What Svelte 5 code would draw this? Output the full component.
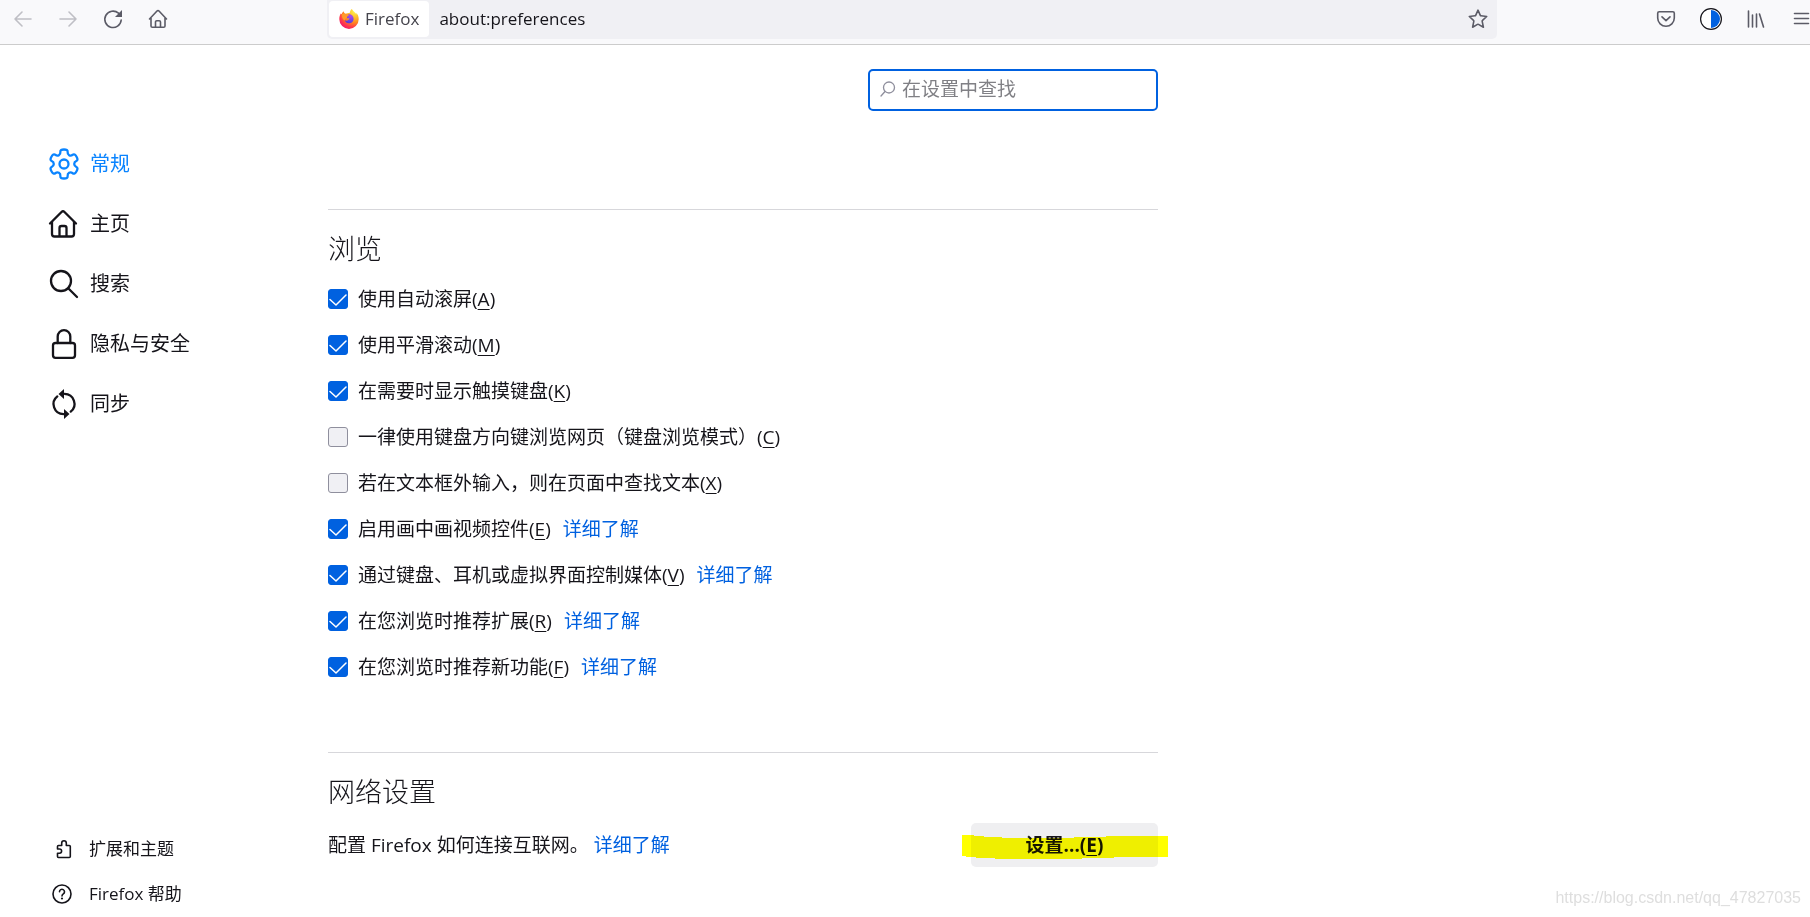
<script>
let query = $state('');
let selected = $state('general');

const categories = [
    { id: 'general', label: '常规' },
    { id: 'home', label: '主页' },
    { id: 'search', label: '搜索' },
    { id: 'privacy', label: '隐私与安全' },
    { id: 'sync', label: '同步' }
];

let options = $state([
    { id: 'autoscroll', text: '使用自动滚屏', key: 'A', checked: true },
    { id: 'smooth', text: '使用平滑滚动', key: 'M', checked: true },
    { id: 'touch', text: '在需要时显示触摸键盘', key: 'K', checked: true },
    { id: 'cursor', text: '一律使用键盘方向键浏览网页（键盘浏览模式）', key: 'C', checked: false },
    { id: 'typing', text: '若在文本框外输入，则在页面中查找文本', key: 'X', checked: false },
    { id: 'pip', text: '启用画中画视频控件', key: 'E', checked: true, link: true },
    { id: 'media', text: '通过键盘、耳机或虚拟界面控制媒体', key: 'V', checked: true, link: true },
    { id: 'extensions', text: '在您浏览时推荐扩展', key: 'R', checked: true, link: true },
    { id: 'features', text: '在您浏览时推荐新功能', key: 'F', checked: true, link: true }
]);

// six rounded teeth: quadratic curves through the midpoints of a polar outline
function gearOutline() {
    const points = [];
    for (let tooth = 0; tooth < 6; tooth++) {
        for (const [offset, radius] of [[-19, 10.4], [-15, 15], [15, 15], [19, 10.4]]) {
            const angle = ((tooth * 60 + offset - 90) * Math.PI) / 180;
            points.push([15 + radius * Math.cos(angle), 15 + radius * Math.sin(angle)]);
        }
    }
    const mid = (a, b) => `${((a[0] + b[0]) / 2).toFixed(2)} ${((a[1] + b[1]) / 2).toFixed(2)}`;
    let d = `M${mid(points[points.length - 1], points[0])}`;
    points.forEach((p, i) => {
        d += `Q${p[0].toFixed(2)} ${p[1].toFixed(2)} ${mid(p, points[(i + 1) % points.length])}`;
    });
    return d + 'Z';
}

const gear = gearOutline();
</script>

<div class="window">
    <header class="toolbar">
        <div class="history">
            <button aria-label="后退" disabled>
                <svg viewBox="0 0 18 18"><path d="M17 9H1M8 2L1 9l7 7" /></svg>
            </button>
            <button aria-label="前进" disabled>
                <svg viewBox="0 0 18 18"><path d="M1 9h16M10 2l7 7-7 7" /></svg>
            </button>
            <button aria-label="刷新">
                <svg viewBox="0 0 18 18">
                    <path d="M14.5 3.2A8.2 8.2 0 1 0 17.2 10" />
                    <path class="solid" d="M18 0v7h-7z" />
                </svg>
            </button>
            <button aria-label="主页">
                <svg viewBox="0 0 18 18">
                    <path d="M0.5 9L8 1a1.4 1.4 0 0 1 2 0l7.5 8M2 8v8a1.3 1.3 0 0 0 1.3 1.3h11.4A1.3 1.3 0 0 0 16 16V8M6.5 17v-5a1.3 1.3 0 0 1 1.3-1.3h2.4a1.3 1.3 0 0 1 1.3 1.3v5" />
                </svg>
            </button>
        </div>
        <div class="urlbar">
            <button class="identity">
                <svg viewBox="0 0 20 20">
                    <defs>
                        <radialGradient id="flame" cx="0.78" cy="0.12" r="1">
                            <stop offset="0" stop-color="#fff44f" />
                            <stop offset="0.3" stop-color="#ffc02e" />
                            <stop offset="0.55" stop-color="#ff8a1e" />
                            <stop offset="0.8" stop-color="#ff3a4b" />
                            <stop offset="1" stop-color="#f0136f" />
                        </radialGradient>
                        <radialGradient id="globe" cx="0.7" cy="0.2" r="0.9">
                            <stop offset="0" stop-color="#b04cf0" />
                            <stop offset="1" stop-color="#4a3bd8" />
                        </radialGradient>
                    </defs>
                    <path fill="url(#flame)" d="M12.8 0c-1.3.9-1.9 2.3-1.9 3.7L6.3 4.7C5.2 4.2 4.7 3 4.7 2.2 3.5 3 2.9 4.1 2.7 5.2L1.8 4.6C.7 6.3.3 8.2.3 10.2a9.7 9.7 0 0 0 19.4 0c0-2.6-.9-4.9-2.5-6.4.2.7.2 1.3.1 1.8C16.5 3.3 14.5 2.6 12.8 0z" />
                    <path fill="url(#globe)" d="M9 5.4c2.8-.8 5.6 1.3 5.6 4.4a4.6 4.6 0 0 1-8.9 1.5c1.5.8 2.9.2 3.6-.6.8-.3 1.3-.7 1-1.2-.6-.6-1.5-.3-2.3-.2-.9-1-.5-2.1.5-2.7z" />
                    <path fill="#ff9a2a" d="M2.8 5.2c1.5-.9 3.5-.8 4.7.3l2.8.2c-.3.9-1.5 1.1-1.9 1.7-.4.8-.4 1.5-1.3 1.9-.7.4-1.2 1.3-1.1 2.3-2-1-3.6-3.5-3.2-6.4z" />
                </svg>
                <span>Firefox</span>
            </button>
            <input class="address" type="text" aria-label="地址" value="about:preferences" />
            <button class="bookmark" aria-label="为此页添加书签">
                <svg viewBox="0 0 20 20">
                    <path d="M10 1.200l2.3 5.100a.9.9 0 0 0 .7.5l5.700.7-4.200 3.900a.9.9 0 0 0-.3.9l1.200 5.900-4.900-2.800a1 1 0 0 0-1 0l-4.900 2.800 1.200-5.900a.9.9 0 0 0-.3-.9L1.300 7.500 7 6.800a.9.9 0 0 0 .7-.5z" />
                </svg>
            </button>
        </div>
        <div class="tools">
            <button aria-label="Pocket">
                <svg viewBox="0 0 18 18">
                    <path d="M2.2 1.8h13.6a1.5 1.5 0 0 1 1.5 1.5V8A8.3 8.3 0 0 1 .7 8V3.3a1.5 1.5 0 0 1 1.5-1.5zM5 6.8l4 3.8 4-3.8" />
                </svg>
            </button>
            <button aria-label="深色模式">
                <svg viewBox="0 0 18 18">
                    <circle cx="9" cy="9" r="10.4" fill="#fff" stroke="#15141a" stroke-width="1.2" />
                    <path d="M9 0a9 9 0 0 1 0 18z" fill="#0061e0" stroke="none" />
                </svg>
            </button>
            <button aria-label="书库">
                <svg viewBox="0 0 18 18"><path d="M1.5 1v16M5.5 5v12M9.5 4v13M12.5 4l4 13" /></svg>
            </button>
            <button aria-label="打开应用程序菜单">
                <svg viewBox="0 0 18 18"><path d="M2.5 3.5h14M2.5 8.5h14M2.5 13.5h14" /></svg>
            </button>
        </div>
    </header>

    <div class="content">
        <aside>
            <nav class="categories">
                {#each categories as category (category.id)}
                    <button class:selected={selected === category.id} onclick={() => (selected = category.id)}>
                        <svg viewBox="0 0 30 30">
                            {#if category.id === 'general'}
                                <path d={gear} />
                                <circle cx="15" cy="15" r="4.5" />
                            {:else if category.id === 'home'}
                                <path d="M1 14.5L12.500 3a2.200 2.200 0 0 1 3 0L27 14.500M3 13v12a2.500 2.500 0 0 0 2.500 2.500h17A2.500 2.500 0 0 0 25 25V13M10.500 27V19a2 2 0 0 1 2-2h3a2 2 0 0 1 2 2v8" />
                            {:else if category.id === 'search'}
                                <circle cx="12" cy="12" r="10" />
                                <path d="M19.2 19.2L28 28" />
                            {:else if category.id === 'privacy'}
                                <rect x="4" y="14" width="22" height="14.8" rx="2.5" />
                                <path d="M8.7 14V7.500a6.300 6.300 0 0 1 12.600 0V14" />
                            {:else}
                                <path d="M8.3 7.400A10 10 0 0 0 14.500 25.200M15.500 4.800A10 10 0 0 1 21.700 22.600" />
                                <path class="solid" d="M9.500 5L15 0v10zM20.500 25L15 20v10z" />
                            {/if}
                        </svg>
                        <span>{category.label}</span>
                    </button>
                {/each}
            </nav>
            <nav class="support">
                <a href="#addons">
                    <svg viewBox="0 0 20 20">
                        <path d="M9.7 6.500V4a2.300 2.300 0 0 1 4.600 0v2.500h3a1 1 0 0 1 1 1v10a1 1 0 0 1-1 1H6.500a1 1 0 0 1-1-1v-3.300h2a2.100 2.100 0 0 0 0-4.200h-2V7.500a1 1 0 0 1 1-1z" />
                    </svg>
                    <span>扩展和主题</span>
                </a>
                <a href="#help">
                    <svg viewBox="0 0 20 20">
                        <circle cx="10" cy="10" r="9" />
                        <path d="M7.500 7.800a2.500 2.500 0 1 1 3.800 2.100c-.9.6-1.300 1-1.300 2" />
                        <circle class="solid" cx="10" cy="14.5" r="1.1" />
                    </svg>
                    <span>Firefox 帮助</span>
                </a>
            </nav>
        </aside>

        <main>
            <label class="search">
                <svg viewBox="0 0 16 16"><circle cx="9" cy="6.500" r="5.500" /><path d="M5 10.500L1 15" /></svg>
                <input type="text" bind:value={query} placeholder="在设置中查找" aria-label="在设置中查找" />
            </label>

            <section class="browsing">
                <h2>浏览</h2>
                <ul>
                    {#each options as option (option.id)}
                        <li>
                            <label>
                                <input type="checkbox" bind:checked={option.checked} />
                                <span>{option.text}(<u>{option.key}</u>)</span>
                            </label>
                            {#if option.link}
                                <a href="#{option.id}">详细了解</a>
                            {/if}
                        </li>
                    {/each}
                </ul>
            </section>

            <section>
                <h2>网络设置</h2>
                <div class="network">
                    <p>配置 Firefox 如何连接互联网。</p>
                    <a href="#network">详细了解</a>
                    <div class="marked">
                        <button>设置...(<u>E</u>)</button>
                        <svg class="marker" viewBox="0 0 206 24" preserveAspectRatio="none">
                            <path d="M0 0h12v1h10v1h18v1h72V2h32V1h62v21h-54v1h-32v1H33v-1H14v-1H4v-1H0z" />
                        </svg>
                    </div>
                </div>
            </section>
        </main>
    </div>

    <div class="watermark">https://blog.csdn.net/qq_47827035</div>
</div>

<style>
:global(body) {
    margin: 0;
    background: #fff;
}

.window {
    display: flex;
    flex-direction: column;
    min-height: 100vh;
    position: relative;
    font-family: "Open Sans", "Noto Sans CJK SC", sans-serif;
    font-size: 19px;
    line-height: 28px;
    color: #15141a;
}

button,
input {
    font: inherit;
    color: inherit;
    margin: 0;
    padding: 0;
    border: none;
    background: none;
}

svg {
    display: block;
    flex: none;
    overflow: visible;
    fill: none;
    stroke: currentColor;
    stroke-linecap: round;
    stroke-linejoin: round;
}

.solid {
    fill: currentColor;
    stroke: none;
}

a {
    color: #0061e0;
    text-decoration: none;
}

u {
    text-decoration-thickness: 1px;
    text-underline-offset: 3px;
}

.toolbar {
    display: flex;
    height: 44px;
    background: #f9f9fb;
    border-bottom: 1px solid #ccc;
    color: #5b5b66;
}

.history,
.tools {
    display: flex;
    align-items: center;
    gap: 27px;
    height: 38px;
    box-sizing: border-box;
}

.history {
    width: 327px;
    padding-left: 14px;
}

.tools {
    width: 313px;
    justify-content: flex-end;
}

.history svg,
.tools svg {
    width: 18px;
    height: 18px;
    stroke-width: 1.6;
}

.history button:disabled {
    color: #bfbfc5;
}

.urlbar {
    flex: 1;
    display: flex;
    align-items: center;
    height: 39px;
    padding-bottom: 1px;
    box-sizing: border-box;
    background: #f0f0f4;
    border-radius: 0 0 5px 5px;
    font-size: 17px;
}

.identity {
    display: flex;
    align-items: center;
    gap: 6px;
    height: 36px;
    margin-left: 2px;
    padding: 0 10px;
    border-radius: 4px;
    background: #fff;
    color: #45444c;
}

.identity svg {
    width: 20px;
    height: 20px;
    stroke: none;
}

.address {
    flex: 1;
    min-width: 0;
    margin-left: 10px;
    outline: none;
    color: #15141a;
}

.bookmark {
    padding-right: 9px;
}

.bookmark svg {
    width: 20px;
    height: 20px;
    stroke-width: 1.6;
}

.content {
    flex: 1;
    display: flex;
}

aside {
    width: 328px;
    display: flex;
    flex-direction: column;
}

.categories {
    padding-top: 89px;
}

.categories button {
    display: flex;
    align-items: center;
    gap: 11px;
    width: 100%;
    height: 60px;
    padding-left: 49px;
    font-size: 20px;
}

.categories svg {
    width: 30px;
    height: 30px;
    stroke-width: 2.3;
}

.categories .selected {
    color: #0a84ff;
}

.support {
    margin-top: auto;
    padding-bottom: 1px;
}

.support a {
    display: flex;
    align-items: center;
    gap: 17px;
    height: 45px;
    padding-left: 52px;
    font-size: 17px;
    color: #15141a;
}

.support svg {
    width: 20px;
    height: 20px;
    stroke-width: 1.6;
}

main {
    flex: 0 1 830px;
    padding-top: 24px;
}

.search {
    display: flex;
    align-items: center;
    gap: 6px;
    width: 290px;
    height: 42px;
    margin: 0 0 98px auto;
    padding: 0 10px 2px;
    box-sizing: border-box;
    border: 2px solid #0061e0;
    border-radius: 5px;
    color: #8f8f9d;
}

.search svg {
    width: 16px;
    height: 16px;
    stroke-width: 1.3;
}

.search input {
    flex: 1;
    min-width: 0;
    outline: none;
    color: #15141a;
}

.search input::placeholder {
    color: #808085;
    opacity: 1;
}

section {
    border-top: 1px solid #d7d7db;
    padding-top: 19px;
}

h2 {
    margin: 0;
    font-size: 27px;
    font-weight: 300;
    line-height: 40px;
}

.browsing {
    margin-bottom: 62px;
}

ul {
    list-style: none;
    margin: 7px 0 0;
    padding: 0;
}

li {
    display: flex;
    align-items: center;
    gap: 12px;
    height: 46px;
}

li label {
    display: flex;
    align-items: center;
    gap: 10px;
}

input[type="checkbox"] {
    appearance: none;
    width: 20px;
    height: 20px;
    border: 1px solid #8f8f9d;
    border-radius: 3px;
    background: #f0f0f4;
}

input[type="checkbox"]:checked {
    border-color: #0061e0;
    background: #0061e0 url("data:image/svg+xml,%3Csvg xmlns='http://www.w3.org/2000/svg' viewBox='0 0 18 18'%3E%3Cpath d='M1 9.5l6 5.5L17 5' fill='none' stroke='white' stroke-width='1.5' stroke-linecap='round' stroke-linejoin='round'/%3E%3C/svg%3E") center / 18px 18px no-repeat;
}

.network {
    display: flex;
    align-items: center;
    gap: 5px;
    padding-top: 11px;
}

.network p {
    margin: 0;
}

.marked {
    position: relative;
    margin-left: auto;
}

.marked button {
    width: 187px;
    height: 44px;
    border-radius: 5px;
    background: #efeff1;
    font-weight: 700;
}

/* highlighter stroke over the button */
.marker {
    position: absolute;
    top: 12px;
    left: -9px;
    width: 206px;
    height: 24px;
    fill: #ff0;
    stroke: none;
    mix-blend-mode: multiply;
    pointer-events: none;
}

.watermark {
    position: absolute;
    right: 9px;
    bottom: 5px;
    font-family: "Liberation Sans", Arial, sans-serif;
    font-size: 16px;
    color: #dedede;
}
</style>
